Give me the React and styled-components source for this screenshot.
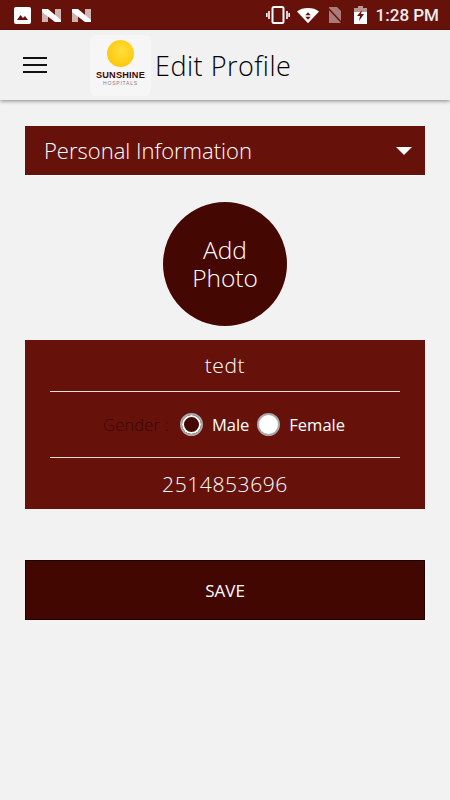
import React from "react";
import styled, { createGlobalStyle } from "styled-components";

const GlobalStyle = createGlobalStyle`
  html, body {
    margin: 0;
    padding: 0;
    background: #f2f2f2;
    font-family: "Open Sans", "Noto Sans", sans-serif;
  }
  * { box-sizing: border-box; }
`;

const Screen = styled.div`
  width: 450px;
  height: 800px;
  overflow: hidden;
  display: flex;
  flex-direction: column;
  background: #f2f2f2;
`;

const StatusBar = styled.div`
  height: 30px;
  flex: none;
  background: #66120b;
  display: flex;
  align-items: center;
  justify-content: space-between;
  padding: 0 11px 0 14px;
`;

const StatusGroup = styled.div`
  display: flex;
  align-items: center;
  gap: ${(p) => p.$gap || 0}px;
`;

const Clock = styled.span`
  font-family: Roboto, sans-serif;
  font-size: 17px;
  font-weight: 500;
  color: #f4eeee;
  margin-left: 2px;
`;

const Header = styled.header`
  height: 70px;
  flex: none;
  background: #f1f1f1;
  box-shadow: 0 1px 4px rgba(0, 0, 0, 0.45);
  display: flex;
  align-items: center;
  padding-left: 23px;
  position: relative;
`;

const Burger = styled.div`
  width: 24px;
  display: flex;
  flex-direction: column;
  gap: 5px;
  margin-right: 43px;
  span {
    height: 2px;
    background: #111;
  }
`;

const LogoTile = styled.div`
  width: 61px;
  height: 61px;
  border-radius: 6px;
  background: #f6f6f6;
  display: flex;
  flex-direction: column;
  align-items: center;
  padding-top: 5px;
  margin-right: 4px;
`;

const Sun = styled.div`
  width: 27px;
  height: 27px;
  border-radius: 50%;
  background: radial-gradient(circle at 55% 40%, #ffdf3a, #fdc70c 75%);
  margin-bottom: 3px;
`;

const LogoName = styled.div`
  font-family: "Liberation Sans", sans-serif;
  font-size: 9.2px;
  line-height: 10px;
  font-weight: 700;
  letter-spacing: 0.2px;
  color: #3d0808;
`;

const LogoSub = styled.div`
  font-family: "Liberation Sans", sans-serif;
  font-size: 5px;
  line-height: 6px;
  letter-spacing: 0.8px;
  color: #8d7880;
`;

const Title = styled.h1`
  margin: 0;
  font-size: 27px;
  font-weight: 300;
  letter-spacing: 0.5px;
  color: #000;
`;

const Content = styled.main`
  padding: 26px 25px 0;
  display: flex;
  flex-direction: column;
  align-items: center;
`;

const Dropdown = styled.div`
  width: 400px;
  height: 50px;
  background: #66120b;
  border-bottom: 1px solid #fff;
  display: flex;
  align-items: center;
  justify-content: space-between;
  padding: 0 13px 2px 19px;
  color: #fff;
  font-size: 22px;
  font-weight: 300;
`;

const Caret = styled.div`
  width: 0;
  height: 0;
  border-left: 8px solid transparent;
  border-right: 8px solid transparent;
  border-top: 8px solid #fff;
  margin-top: 2px;
`;

const PhotoCircle = styled.div`
  width: 124px;
  height: 124px;
  border-radius: 50%;
  background: #450701;
  margin: 26px 0 14px;
  display: flex;
  align-items: center;
  justify-content: center;
  text-align: center;
  color: #fff;
  font-size: 24.5px;
  line-height: 28px;
  font-weight: 300;
`;

const Card = styled.section`
  width: 400px;
  height: 169px;
  background: #66120b;
  padding: 0 25px;
  display: flex;
  flex-direction: column;
`;

const CardRow = styled.div`
  height: ${(p) => p.$h}px;
  display: flex;
  align-items: center;
  justify-content: center;
  padding-bottom: ${(p) => p.$pb || 0}px;
  padding-right: ${(p) => p.$pr || 0}px;
  color: #fff;
  font-size: 21px;
  font-weight: 300;
  letter-spacing: 0.6px;
  border-bottom: ${(p) => (p.$line ? "1px solid #e8dede" : "none")};
`;

const GenderLabel = styled.span`
  font-size: 16.5px;
  font-weight: 300;
  letter-spacing: 0.2px;
  color: #3a0705;
  margin-right: 11px;
`;

const Radio = styled.span`
  width: 23px;
  height: 23px;
  border-radius: 50%;
  border: 2px solid #a9a9a9;
  background: ${(p) => (p.$checked ? "#450701" : "#fff")};
  box-shadow: ${(p) => (p.$checked ? "inset 0 0 0 2px #fff" : "none")};
  margin-right: 9px;
`;

const RadioLabel = styled.span`
  font-size: 16.5px;
  font-weight: 400;
  letter-spacing: 0;
  color: #fff;
  margin-right: ${(p) => p.$mr || 0}px;
`;

const SaveButton = styled.button`
  width: 400px;
  height: 60px;
  margin-top: 51px;
  background: #420700;
  border: 1px solid #1c0200;
  color: #fff;
  font-family: inherit;
  font-size: 17px;
  font-weight: 400;
`;

const Icon = styled.svg`
  display: block;
  margin-right: ${(p) => p.$mr || 0}px;
`;

const LeftIcons = () => (
  <StatusGroup $gap={11}>
    <Icon width="17" height="17" viewBox="0 0 17 17">
      <rect width="17" height="17" rx="2" fill="#fff" />
      <path d="M3 13l3.5-5 2.5 3 2-2 3 4z" fill="#66120b" />
    </Icon>
    {[0, 1].map((i) => (
      <Icon key={i} width="19" height="15" viewBox="0 0 19 15">
        <path d="M0 1h6v13H0z" fill="#cfb3b0" />
        <path d="M13 1h6v13h-6z" fill="#cfb3b0" />
        <path d="M0 1h6l13 11v2h-6L0 4z" fill="#fff" />
      </Icon>
    ))}
  </StatusGroup>
);

const RightIcons = () => (
  <StatusGroup $gap={7}>
    <Icon width="24" height="18" viewBox="0 0 24 18">
      <rect x="6.5" y="1" width="11" height="16" rx="1.5" fill="none" stroke="#fff" strokeWidth="2" />
      <path d="M3 5v8M0.8 7v4M21 5v8M23.2 7v4" stroke="#fff" strokeWidth="1.6" />
    </Icon>
    <Icon width="22" height="17" viewBox="0 0 24 17">
      <path d="M0 4C6-1 18-1 24 4L12 17z" fill="#fff" />
      <path d="M12 5l3 3.2H9zM12 13l-3-3.2h6z" fill="#66120b" />
    </Icon>
    <Icon width="17" height="18" viewBox="0 0 17 18" $mr={4}>
      <path d="M3 1h8l4 4v12H3z" fill="#a87b77" />
      <path d="M1 1l15 16" stroke="#66120b" strokeWidth="1.5" />
    </Icon>
    <Icon width="13" height="18" viewBox="0 0 13 18">
      <path d="M4 0h5v2h4v16H0V2h4z" fill="#fff" />
      <path d="M4 0h5v2h4v4H0V2h4z" fill="#b99693" />
      <path d="M8 4L3 10h3l-1 5 5-7H7z" fill="#66120b" />
    </Icon>
    <Clock>1:28 PM</Clock>
  </StatusGroup>
);

export default function App() {
  return (
    <Screen>
      <GlobalStyle />
      <StatusBar>
        <LeftIcons />
        <RightIcons />
      </StatusBar>
      <Header>
        <Burger>
          <span />
          <span />
          <span />
        </Burger>
        <LogoTile>
          <Sun />
          <LogoName>SUNSHINE</LogoName>
          <LogoSub>HOSPITALS</LogoSub>
        </LogoTile>
        <Title>Edit Profile</Title>
      </Header>
      <Content>
        <Dropdown>
          Personal Information
          <Caret />
        </Dropdown>
        <PhotoCircle>
          Add
          <br />
          Photo
        </PhotoCircle>
        <Card>
          <CardRow $h={52} $pb={2} $line>tedt</CardRow>
          <CardRow $h={66} $pr={2} $line>
            <GenderLabel>Gender :</GenderLabel>
            <Radio $checked />
            <RadioLabel $mr={8}>Male</RadioLabel>
            <Radio />
            <RadioLabel>Female</RadioLabel>
          </CardRow>
          <CardRow $h={51}>2514853696</CardRow>
        </Card>
        <SaveButton>SAVE</SaveButton>
      </Content>
    </Screen>
  );
}
